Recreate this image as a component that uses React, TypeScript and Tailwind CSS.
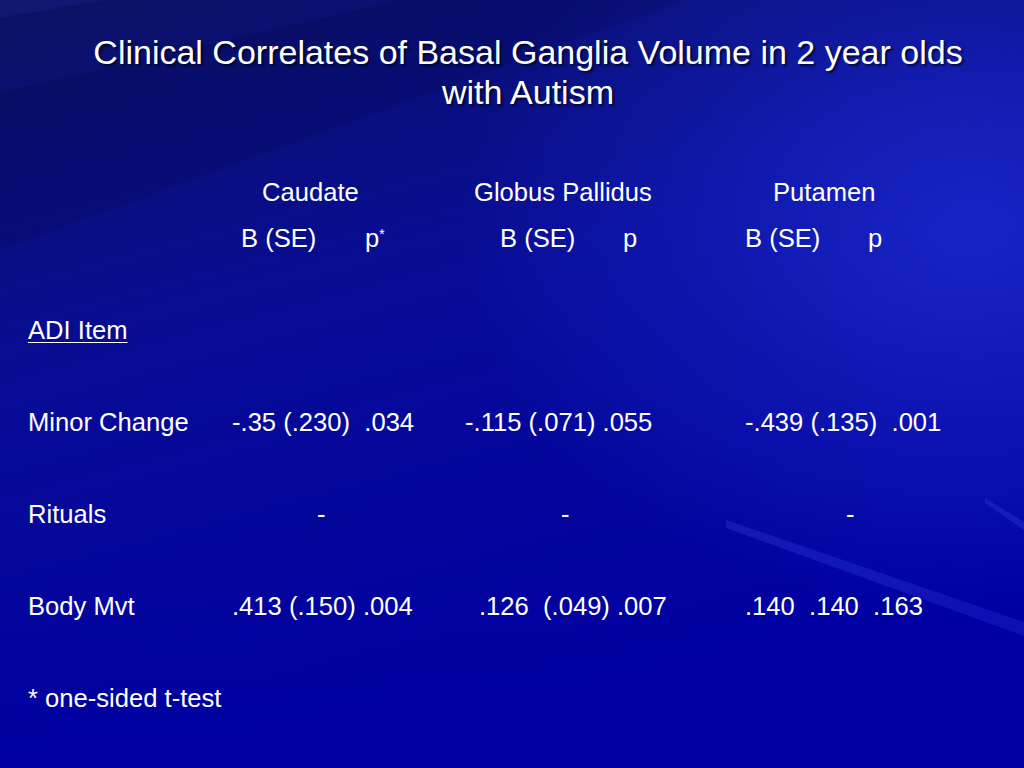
import * as React from 'react'

// faint streaks fanning out from beyond the top-right corner
function RayBackground() {
  const ox = 1180
  const oy = -180
  const rays: { a: number; b: number; fill: string; op: number }[] = [
    { a: 150, b: 156, fill: '#000040', op: 0.18 },
    { a: 158, b: 160, fill: '#3a4cff', op: 0.08 },
    { a: 163, b: 170, fill: '#000030', op: 0.18 },
    { a: 172, b: 174, fill: '#4a5cff', op: 0.07 },
    { a: 178, b: 186, fill: '#000040', op: 0.15 },
    { a: 188, b: 189.5, fill: '#5a6aff', op: 0.08 },
    { a: 193, b: 200, fill: '#000030', op: 0.12 },
    { a: 120, b: 128, fill: '#000030', op: 0.15 },
    { a: 132, b: 134, fill: '#4050ff', op: 0.08 },
  ]
  const toPts = (deg: number, r: number) => {
    const rad = (deg * Math.PI) / 180
    return `${ox + r * Math.cos(rad)},${oy - r * Math.sin(rad)}`
  }
  return (
    <svg
      className="absolute inset-0 h-full w-full"
      viewBox="0 0 1024 768"
      preserveAspectRatio="none"
    >
      <defs>
        <linearGradient id="base" x1="0" y1="0" x2="0.35" y2="1">
          <stop offset="0" stopColor="#0b1262" />
          <stop offset="0.45" stopColor="#080c96" />
          <stop offset="1" stopColor="#0000a2" />
        </linearGradient>
        <radialGradient id="glow" cx="0.95" cy="0.3" r="0.5">
          <stop offset="0" stopColor="#1f30d8" stopOpacity="0.7" />
          <stop offset="1" stopColor="#1f30d8" stopOpacity="0" />
        </radialGradient>
        <linearGradient id="fade" x1="0" y1="0" x2="0" y2="1">
          <stop offset="0.75" stopColor="#0000a2" stopOpacity="0" />
          <stop offset="1" stopColor="#0000a2" stopOpacity="0.9" />
        </linearGradient>
      </defs>
      <rect width="1024" height="768" fill="url(#base)" />
      <rect width="1024" height="768" fill="url(#glow)" />
      {rays.map((r, i) => (
        <polygon
          key={i}
          points={`${ox},${oy} ${toPts(r.a, 2000)} ${toPts(r.b, 2000)}`}
          fill={r.fill}
          opacity={r.op}
        />
      ))}
      {/* brighter streak lower right */}
      <polygon points="726,520 1024,622 1024,636 726,528" fill="#4a5cff" opacity="0.22" />
      <polygon points="985,498 1024,522 1024,530 985,503" fill="#5566ff" opacity="0.2" />
      <rect width="1024" height="768" fill="url(#fade)" />
    </svg>
  )
}

export default function App() {
  return (
    <div className="relative h-[768px] w-[1024px] overflow-hidden font-['Liberation_Sans',Arial,sans-serif] text-white">
      <RayBackground />

      <div className="relative">
        {/* title */}
        <div className="pt-[32px] pl-[32px] text-center text-[34px] leading-[40px] [text-shadow:2px_2px_2px_rgba(0,0,20,0.7)]">
          <div>Clinical Correlates of Basal Ganglia Volume in 2 year olds</div>
          <div>with Autism</div>
        </div>

        {/* table body */}
        <div className="mt-[57px] pl-[28px] text-[25.6px] leading-[46px] whitespace-pre">
          <div className="flex h-[46px]">
            <span className="w-[234px] shrink-0" />
            <span className="w-[212px] shrink-0">Caudate</span>
            <span className="w-[299px] shrink-0">Globus Pallidus</span>
            <span>Putamen</span>
          </div>
          <div className="flex h-[46px]">
            <span className="w-[213px] shrink-0" />
            <span className="w-[124px] shrink-0">B (SE)</span>
            <span className="w-[135px] shrink-0">
              p<sup className="relative top-[4px] text-[14px] align-top leading-[30px]">*</sup>
            </span>
            <span className="w-[123px] shrink-0">B (SE)</span>
            <span className="w-[122px] shrink-0">p</span>
            <span className="w-[123px] shrink-0">B (SE)</span>
            <span>p</span>
          </div>
          <div className="h-[46px]" />
          <div className="h-[46px]">
            <span className="underline decoration-1 underline-offset-[3px]">ADI Item</span>
          </div>
          <div className="h-[46px]" />
          <div className="flex h-[46px]">
            <span className="w-[204px] shrink-0">Minor Change</span>
            <span className="w-[233px] shrink-0">-.35 (.230)  .034</span>
            <span className="w-[280px] shrink-0">-.115 (.071) .055</span>
            <span>-.439 (.135)  .001</span>
          </div>
          <div className="h-[46px]" />
          <div className="flex h-[46px]">
            <span className="w-[289px] shrink-0">Rituals</span>
            <span className="w-[244px] shrink-0">-</span>
            <span className="w-[285px] shrink-0">-</span>
            <span>-</span>
          </div>
          <div className="h-[46px]" />
          <div className="flex h-[46px]">
            <span className="w-[204px] shrink-0">Body Mvt</span>
            <span className="w-[247px] shrink-0">.413 (.150) .004</span>
            <span className="w-[266px] shrink-0">.126  (.049) .007</span>
            <span>.140  .140  .163</span>
          </div>
          <div className="h-[46px]" />
          <div className="h-[46px]">* one-sided t-test</div>
        </div>
      </div>
    </div>
  )
}
